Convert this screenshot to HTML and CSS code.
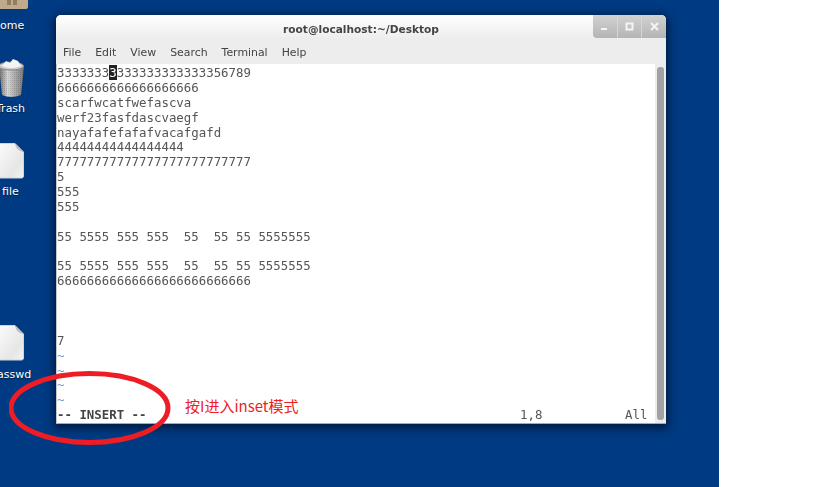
FILE: index.html
```html
<!DOCTYPE html>
<html lang="en">
<head>
<meta charset="utf-8">
<title>root@localhost</title>
<link rel="stylesheet" href="styles.css">
</head>
<body>
<div class="desktop">
  <div class="icon home-icon">
    <svg width="30" height="9" viewBox="0 0 30 9"><path d="M0 0H28V7Q28 9 26 9H0Z" fill="#bfab8c"/><rect x="7" y="0" width="4" height="5" fill="#8f7e64"/><rect x="13" y="0" width="4" height="5" fill="#8f7e64"/></svg>
    <span class="icon-label">home</span>
  </div>
  <div class="icon trash-icon">
    <svg width="28" height="40" viewBox="0 0 28 40">
      <defs>
        <linearGradient id="tr" x1="0" x2="1" y1="0" y2="0"><stop offset="0" stop-color="#6f6f6f"/><stop offset=".35" stop-color="#d8d8d8"/><stop offset="1" stop-color="#777"/></linearGradient>
        <pattern id="mesh" width="2" height="2" patternUnits="userSpaceOnUse"><rect width="1" height="1" fill="#0002"/></pattern>
      </defs>
      <path d="M1 8Q13 14 26 8L23 37Q13 41 4 37Z" fill="url(#tr)"/>
      <path d="M1 8Q13 14 26 8L23 37Q13 41 4 37Z" fill="url(#mesh)"/>
      <ellipse cx="13" cy="8" rx="12.5" ry="4" fill="#d0d0d0" stroke="#888"/>
      <path d="M4 8L8 3L12 5L15 1L20 3L23 8Q13 12 4 8Z" fill="#f4f4f4"/>
    </svg>
    <span class="icon-label">Trash</span>
  </div>
  <div class="icon file-icon">
    <svg width="26" height="36" viewBox="0 0 26 36">
      <defs><linearGradient id="pg" x1="0" x2="1" y1="0" y2="1"><stop offset="0" stop-color="#fbfbfb"/><stop offset=".7" stop-color="#e6e6e6"/><stop offset="1" stop-color="#f4f4f4"/></linearGradient></defs>
      <path d="M0 .5H16L24.5 9V33Q24.5 35 22.5 35H0Z" fill="url(#pg)" stroke="#d4d4d4"/><path d="M16 .5Q17 8 24.5 9Z" fill="#bdbdbd"/>
    </svg>
    <span class="icon-label">file</span>
  </div>
  <div class="icon passwd-icon">
    <svg width="26" height="36" viewBox="0 0 26 36"><path d="M0 .5H16L24.5 9V33Q24.5 35 22.5 35H0Z" fill="url(#pg)" stroke="#d4d4d4"/><path d="M16 .5Q17 8 24.5 9Z" fill="#bdbdbd"/></svg>
    <span class="icon-label">asswd</span>
  </div>

  <div class="window">
    <div class="titlebar">
      <span class="title">root@localhost:~/Desktop</span>
      <div class="controls">
        <span class="ctl"><svg width="9" height="9" viewBox="0 0 9 9"><rect x="1" y="6" width="6" height="2" fill="#f4f4f4"/></svg></span>
        <span class="ctl"><svg width="9" height="9" viewBox="0 0 9 9"><rect x="1.5" y="1.5" width="6" height="6" fill="none" stroke="#f4f4f4" stroke-width="2"/></svg></span>
        <span class="ctl"><svg width="9" height="9" viewBox="0 0 9 9"><path d="M1 1L8 8M8 1L1 8" stroke="#f4f4f4" stroke-width="2"/></svg></span>
      </div>
    </div>
    <div class="menubar">
      <span>File</span><span>Edit</span><span>View</span><span>Search</span><span>Terminal</span><span>Help</span>
    </div>
    <div class="term">
      <pre class="screen">3333333<span class="cursor">3</span>333333333333356789
6666666666666666666
scarfwcatfwefascva
werf23fasfdascvaegf
nayafafefafafvacafgafd
44444444444444444
77777777777777777777777777
5
555
555

55 5555 555 555  55  55 55 5555555

55 5555 555 555  55  55 55 5555555
66666666666666666666666666



7
<span class="tilde">~</span>
<span class="tilde">~</span>
<span class="tilde">~</span>
<span class="tilde">~</span>
<span class="status"><b>-- INSERT --</b><span class="pos">1,8</span><span class="all">All</span></span></pre>
      <div class="scrollbar"><div class="thumb"></div></div>
    </div>
  </div>

  <svg class="circle" width="170" height="80" viewBox="0 0 170 80"><ellipse cx="80.5" cy="37" rx="78.5" ry="34.5" fill="none" stroke="#ee1c25" stroke-width="5"/></svg>
  <span class="note">按I进入inset模式</span>
</div>
</body>
</html>
```
FILE: styles.css
```css
html, body { margin: 0; padding: 0; background: #fff; }
body { width: 819px; height: 487px; overflow: hidden; }
.desktop { position: relative; width: 719px; height: 487px; background: #003a82; overflow: hidden; font-family: "Liberation Sans", sans-serif; }
.icon { position: absolute; left: 0; width: 26px; }
.icon svg { display: block; }
.icon-label { position: absolute; color: #fff; font: 11px/13px "DejaVu Sans", sans-serif; white-space: nowrap; text-shadow: 0 1px 1px #0008; }
.home-icon { top: 0; }
.home-icon .icon-label { top: 19px; left: -7px; }
.trash-icon { top: 58px; left: -2px; }
.trash-icon .icon-label { top: 44px; left: -2px; }
.file-icon { top: 143px; left: -1px; }
.file-icon .icon-label { top: 42px; left: 3px; }
.passwd-icon { top: 325px; left: -1px; }
.passwd-icon .icon-label { top: 43px; left: -2px; }
.window { position: absolute; left: 56px; top: 15px; width: 610px; height: 409px; display: flex; flex-direction: column; border-radius: 5px 5px 0 0; background: #ededed; box-shadow: 0 2px 8px 2px #00122ecc; overflow: hidden; }
.titlebar { flex: 0 0 24px; height: 24px; position: relative; display: flex; justify-content: center; align-items: center; background: linear-gradient(#fff, #ededed); }
.title { font: bold 10.6px/14px "DejaVu Sans", sans-serif; color: #444; margin-top: 4px; filter: blur(.3px); }
.controls { position: absolute; right: 0; top: 0; height: 23px; width: 73px; display: flex; border-radius: 0 0 0 4px; background: linear-gradient(#d2d2d2, #b4b4b4); }
.ctl { flex: 1; display: flex; align-items: center; justify-content: center; border-left: 1px solid #d6d6d6; }
.ctl:first-child { border-left: 0; }
.menubar { flex: 0 0 25px; display: flex; gap: 14px; padding: 7px 0 0 7px; box-sizing: border-box; font: 10.9px/14px "DejaVu Sans", sans-serif; color: #444; filter: blur(.3px); }
.term { flex: 1; min-height: 0; display: flex; background: #fff; border-left: 1px solid #c8c8c8; border-bottom: 1px solid #aaa; }
.screen { flex: 1; margin: 0; padding: 2px 0 0 0; font: 12.4px/14.87px "DejaVu Sans Mono", monospace; color: #555; position: relative; filter: blur(.35px); }
.cursor { background: #222; color: #fff; }
.tilde { color: #6f9bd8; }
.status { position: relative; display: block; }
.status b { font-weight: bold; color: #444; }
.pos { position: absolute; left: 463px; top: 0; }
.all { position: absolute; left: 568px; top: 0; }
.scrollbar { flex: 0 0 11px; background: #ededed; padding: 3px 2px 3px 2px; box-sizing: border-box; }
.thumb { height: 100%; background: #a2a2a2; border-radius: 3px; }
.circle { position: absolute; left: 9px; top: 371px; }
.note { position: absolute; left: 185px; top: 396px; font: 15px/20px "Noto Sans CJK SC", sans-serif; color: #ee1c25; }
```
